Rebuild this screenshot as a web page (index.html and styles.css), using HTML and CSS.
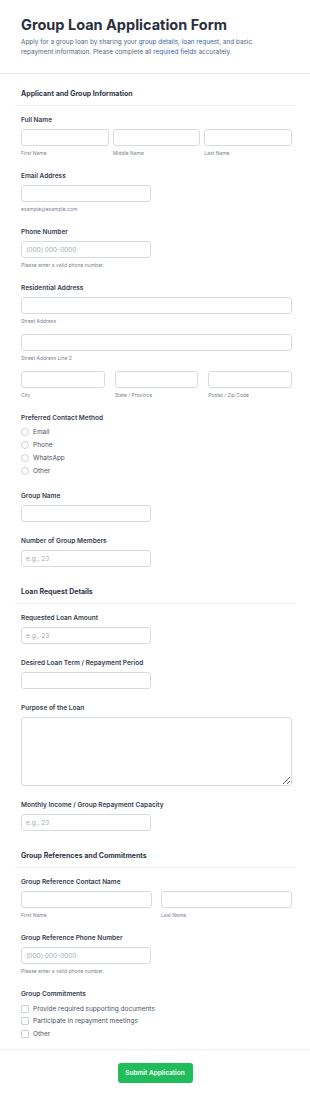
FILE: index.html
```html
<!DOCTYPE html>
<html lang="en">
<head>
  <meta charset="UTF-8">
  <title>Group Loan Application Form</title>
  <link rel="stylesheet" href="styles.css">
</head>
<body>

  <header class="form-header">
    <h1>Group Loan Application Form</h1>
    <p class="intro">Apply for a group loan by sharing your <span class="hl">group details</span>, <span class="hl">loan request</span>, and basic repayment information. Please complete all <span class="hl">required fields</span> accurately.</p>
  </header>

  <form class="form-body">

    <section class="section">
      <h2 class="section-title">Applicant and Group Information</h2>

      <div class="field">
        <label class="label">Full Name</label>
        <div class="row row-3 tight">
          <div><input type="text" class="input"><span class="sub">First Name</span></div>
          <div><input type="text" class="input"><span class="sub">Middle Name</span></div>
          <div><input type="text" class="input"><span class="sub">Last Name</span></div>
        </div>
      </div>

      <div class="field">
        <label class="label">Email Address</label>
        <input type="email" class="input short">
        <span class="sub">example@example.com</span>
      </div>

      <div class="field">
        <label class="label">Phone Number</label>
        <input type="tel" class="input short" placeholder="(000) 000-0000">
        <span class="sub">Please enter a valid phone number.</span>
      </div>

      <div class="field">
        <label class="label">Residential Address</label>
        <input type="text" class="input">
        <span class="sub">Street Address</span>
        <input type="text" class="input next">
        <span class="sub">Street Address Line 2</span>
        <div class="row row-3 wide next">
          <div><input type="text" class="input"><span class="sub">City</span></div>
          <div><input type="text" class="input"><span class="sub">State / Province</span></div>
          <div><input type="text" class="input"><span class="sub">Postal / Zip Code</span></div>
        </div>
      </div>

      <div class="field">
        <label class="label">Preferred Contact Method</label>
        <div class="options">
          <label class="option"><span class="radio"></span>Email</label>
          <label class="option"><span class="radio"></span>Phone</label>
          <label class="option"><span class="radio"></span>WhatsApp</label>
          <label class="option"><span class="radio"></span>Other</label>
        </div>
      </div>

      <div class="field">
        <label class="label">Group Name</label>
        <input type="text" class="input short">
      </div>

      <div class="field">
        <label class="label">Number of Group Members</label>
        <input type="number" class="input short" placeholder="e.g., 23">
      </div>
    </section>

    <section class="section">
      <h2 class="section-title">Loan Request Details</h2>

      <div class="field">
        <label class="label">Requested Loan Amount</label>
        <input type="number" class="input short" placeholder="e.g., 23">
      </div>

      <div class="field">
        <label class="label">Desired Loan Term / Repayment Period</label>
        <input type="text" class="input short">
      </div>

      <div class="field">
        <label class="label">Purpose of the Loan</label>
        <textarea class="input textarea"></textarea>
      </div>

      <div class="field">
        <label class="label">Monthly Income / Group Repayment Capacity</label>
        <input type="number" class="input short" placeholder="e.g., 23">
      </div>
    </section>

    <section class="section">
      <h2 class="section-title">Group References and Commitments</h2>

      <div class="field">
        <label class="label">Group Reference Contact Name</label>
        <div class="row row-2">
          <div><input type="text" class="input"><span class="sub">First Name</span></div>
          <div><input type="text" class="input"><span class="sub">Last Name</span></div>
        </div>
      </div>

      <div class="field">
        <label class="label">Group Reference Phone Number</label>
        <input type="tel" class="input short" placeholder="(000) 000-0000">
        <span class="sub">Please enter a valid phone number.</span>
      </div>

      <div class="field">
        <label class="label">Group Commitments</label>
        <div class="options">
          <label class="option"><span class="check"></span>Provide required supporting documents</label>
          <label class="option"><span class="check"></span>Participate in repayment meetings</label>
          <label class="option"><span class="check"></span>Other</label>
        </div>
      </div>
    </section>

  </form>

  <footer class="form-footer">
    <button type="button" class="submit">Submit Application</button>
  </footer>

</body>
</html>
```

FILE: styles.css
```css
body {
  margin: 0;
  font-family: Inter, "Noto Sans", sans-serif;
  background-color: #ffffff;
  color: #2c3345;
}

.form-header {
  padding: 15px 21px 16px;
  border-bottom: 1px solid #e4e6ea;
}

.form-header h1 {
  margin: 0;
  font-size: 14.5px;
  line-height: 20px;
  font-weight: 700;
  color: #2b2f3d;
}

.intro {
  max-width: 246px;
  margin: 2px 0 0;
  font-size: 6.4px;
  line-height: 10px;
  color: #56657e;
}

.intro .hl {
  color: #3563a8;
}

.form-body {
  padding: 0 15px;
}

.section {
  padding-top: 15px;
}

.section + .section {
  padding-top: 20px;
}

.section-title {
  margin: 0;
  padding: 0 6px 6px;
  font-size: 7px;
  line-height: 10px;
  font-weight: 700;
  color: #2f3546;
  border-bottom: 1px solid #f0f1f3;
}

.field {
  padding: 0 3px 0 6px;
  margin-top: 14px;
}

.section-title + .field {
  margin-top: 9px;
}

.label {
  display: block;
  font-size: 6.5px;
  line-height: 10px;
  font-weight: 600;
  color: #383e4e;
  margin-bottom: 4px;
}

.input {
  display: block;
  box-sizing: border-box;
  width: 100%;
  height: 17px;
  margin: 0;
  padding: 0 4px;
  border: 1px solid #d8dbe1;
  border-radius: 3px;
  background: #ffffff;
  font-family: inherit;
  font-size: 6.5px;
  color: #2c3345;
}

.input::placeholder {
  color: #a3abb9;
}

.input.short {
  width: 130px;
}

.input.next,
.row.next {
  margin-top: 9px;
}

.textarea {
  height: 69px;
  padding: 4px;
  resize: vertical;
}

.sub {
  display: block;
  margin-top: 4px;
  font-size: 5px;
  line-height: 7px;
  color: #7c8494;
}

.row {
  display: grid;
}

.row-3 {
  grid-template-columns: 1fr 1fr 1fr;
}

.row-3.tight {
  gap: 4px;
}

.row-3.wide {
  gap: 10px;
}

.row-2 {
  grid-template-columns: 1fr 1fr;
  gap: 9px;
}

.options {
  margin-top: -1px;
}

.option {
  display: flex;
  align-items: center;
  height: 12.8px;
  font-size: 6.5px;
  color: #4a5264;
}

.radio,
.check {
  box-sizing: border-box;
  width: 8px;
  height: 8px;
  margin-right: 4px;
  border: 1px solid #cdd1d8;
  background: #ffffff;
}

.radio {
  border-radius: 50%;
}

.check {
  border-radius: 1px;
}

.form-footer {
  margin-top: 8px;
  border-top: 1px solid #eceef1;
  padding: 9px 0 16px;
  text-align: center;
}

.submit {
  width: 75px;
  height: 20px;
  border: none;
  border-radius: 3px;
  background-color: #1fbe5b;
  color: #ffffff;
  font-family: inherit;
  font-size: 6.5px;
  font-weight: 600;
  cursor: pointer;
}
```
